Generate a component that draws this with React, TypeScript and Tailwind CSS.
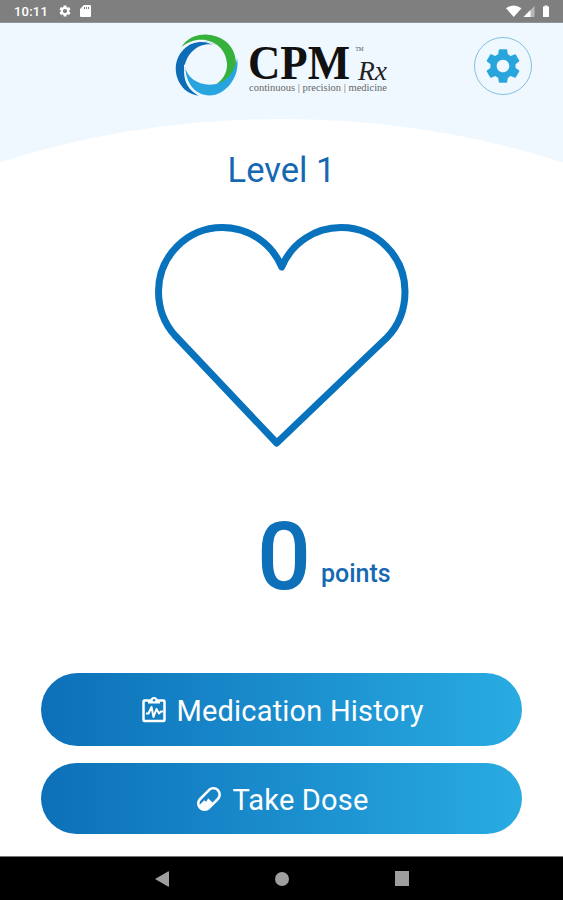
import React from "react"
import { MdSettings } from "react-icons/md"

interface ActionButtonProps {
  label: string;
  icon: React.ReactNode;
  className: string;
}

const StatusBar = () => (
  <div className="h-[23px] shrink-0 bg-[#7f7f7f] border-b border-[#949494] flex items-center justify-between pl-[14px] pr-[12px] text-white">
    <div className="flex items-center">
      <span className="w-[34px] text-[13px] leading-none font-medium tracking-[0.2px]">10:11</span>
      <MdSettings className="ml-[10px] size-[14px]" />
      <svg className="ml-[8px] w-[11px] h-[12px]" viewBox="0 0 11 12" fill="currentColor">
        <path fillRule="evenodd" d="M4 0H10Q11 0 11 1V11Q11 12 10 12H1Q0 12 0 11V4ZM4 2V4H5V2ZM6 2V4H7V2ZM8 2V4H9V2Z" />
      </svg>
    </div>
    <svg className="w-[45px] h-[13px]" viewBox="0 0 45 13" fill="currentColor">
      <path d="M0 3.3Q7.5 -2.3 15.5 3.3L7.75 12Z" />
      <path d="M28.5 1V12H17.5Z" opacity=".45" />
      <path d="M24.5 5V12H17.5Z" />
      <path d="M37 1.5H38.5V.5H41.5V1.5H43V12H37Z" />
    </svg>
  </div>
)

const Logo = () => (
  <svg className="w-[216px] h-[64px]" viewBox="175 33 216 64">
    {/* three swooshes around the ring */}
    <g transform="translate(172 30) scale(.3333)">
      <path fill="#0f6db8" d="M131 45C108 30 72 28 42 52C8 80 4 124 21 156C34 180 52 192 80 197C48 180 33 151 37 116C42 68 82 34 131 45Z" />
      <path fill="#36b23c" d="M28 52C45 24 74 12 108 14C157 17 192 53 192 100C191 136 167 160 134 161C154 149 166 126 165 101C162 64 139 38 103 31C75 26 50 34 28 52Z" />
      <path fill="#28a5df" d="M195 84C204 130 174 183 127 195C78 205 36 163 38 109C45 141 74 164 113 164C157 164 188 132 195 84Z" />
      <path fill="none" stroke="#f0f8ff" strokeWidth="4" d="M38 104C37 145 51 174 84 197M29 56C60 30 104 25 137 52" />
    </g>
    <g className="font-['Liberation_Serif',serif]">
      <text x="248" y="79" fontSize="48" fontWeight="700" fill="#111" textLength="102" lengthAdjust="spacingAndGlyphs">CPM</text>
      <text x="355.5" y="50.5" fontSize="6" fill="#444" textLength="8" lengthAdjust="spacingAndGlyphs">TM</text>
      <text x="358" y="79.5" fontSize="28" fontStyle="italic" fill="#222" textLength="29" lengthAdjust="spacingAndGlyphs">Rx</text>
      <text x="249" y="90.5" fontSize="9.5" fill="#666" textLength="138" lengthAdjust="spacingAndGlyphs">continuous | precision | medicine</text>
    </g>
  </svg>
)

const Header = () => (
  <header className="relative h-[140px] shrink-0 bg-[#f0f8ff]">
    <svg className="absolute inset-0 w-full h-full" viewBox="0 0 563 140" preserveAspectRatio="none">
      <path fill="#fff" d="M0 139.5Q135 96 281.5 96T563 139.5V140H0Z" />
    </svg>
    <div className="relative grid grid-cols-[1fr_216px_1fr] pt-[10px]">
      <span />
      <div className="relative left-[1px]">
        <Logo />
      </div>
      <button aria-label="Settings" className="mt-[4px] mr-[31px] justify-self-end size-[58px] rounded-full border border-[#85bfdf] flex items-center justify-center text-[#29a5de]">
        <MdSettings className="size-[42px]" />
      </button>
    </div>
  </header>
)

const Heart = () => (
  <svg className="w-[256px] h-[226px]" viewBox="154 223 256 226" fill="none">
    <path
      d="M281.7 267A64 64 0 0 0 222 227.5A64 64 0 0 0 158.5 291.5Q158.5 317 175 335.5L276.7 443L387 337.5Q405 319 405 291.5A64 64 0 0 0 341.5 227.5A64 64 0 0 0 281.7 267Z"
      stroke="#0872bc"
      strokeWidth="7"
      strokeLinejoin="round"
    />
  </svg>
)

const HistoryIcon = () => (
  <svg className="w-[24px] h-[27px] relative top-[-2px]" viewBox="0 0 24 27" fill="none" stroke="currentColor" strokeLinejoin="round">
    <rect x="1.5" y="4.5" width="21" height="20.5" rx="1" strokeWidth="2.5" />
    <path d="M6 7.5V4.5H8.5A3.5 3.5 0 0 1 15.5 4.5H18V7.5Z" fill="currentColor" stroke="none" />
    <circle cx="12" cy="4.2" r="1.2" fill="#1681c6" stroke="none" />
    <path d="M4 17.5H6.5L9.5 11L11.5 21L14.5 13L17 17.5L19 15.5H21" strokeWidth="2" />
  </svg>
)

const PillIcon = () => (
  <svg className="size-[30px] relative top-[-1px]" viewBox="0 0 24 24" fill="currentColor">
    <path d="M4.22 11.29L11.29 4.22C13.64 1.88 17.43 1.88 19.78 4.22C22.12 6.56 22.12 10.36 19.78 12.71L12.71 19.78C10.36 22.12 6.56 22.12 4.22 19.78C1.88 17.43 1.88 13.64 4.22 11.29M5.64 12.71C4.59 13.75 4.24 15.24 4.6 16.57L8.2 13L9.8 14.1L11.3 11.3L14.83 14.83L18.36 11.29C19.93 9.73 19.93 7.2 18.36 5.64C16.8 4.07 14.27 4.07 12.71 5.64L5.64 12.71Z" />
  </svg>
)

const ActionButton = ({ label, icon, className }: ActionButtonProps) => (
  <button className={`w-full rounded-full bg-linear-to-r from-[#0d70b8] to-[#29abe2] flex items-center justify-center text-white text-[29px] leading-none ${className}`}>
    {icon}
    <span className="whitespace-nowrap">{label}</span>
  </button>
)

const NavigationBar = () => (
  <nav className="h-[44px] shrink-0 bg-black border-t border-[#777] flex items-center justify-center gap-[106px] text-[#9e9e9e]">
    <svg className="w-[14px] h-[16px]" viewBox="0 0 14 16" fill="currentColor">
      <path d="M0 8L13 .5Q14 0 14 1V15Q14 16 13 15.5Z" />
    </svg>
    <span className="size-[14px] rounded-full bg-[#9e9e9e]" />
    <span className="w-[14px] h-[15px] bg-[#9e9e9e]" />
  </nav>
)

const App = () => {
  return (
    <div className="h-[900px] w-[563px] overflow-hidden flex flex-col bg-white font-[Roboto,sans-serif]">
      <StatusBar />
      <Header />
      <main className="flex-1 flex flex-col items-center px-[41px]">
        <h1 className="mt-[-13px] h-[41px] relative text-[34.5px] leading-[41px] text-[#1768b2]">Level 1</h1>
        <div className="mt-[32px]">
          <Heart />
        </div>
        <div className="mt-[52px] h-[112px] w-full pl-[216px] flex items-baseline text-[#0d70b8]">
          <span className="text-[95px] leading-[112px] font-medium">0</span>
          <span className="ml-[10px] text-[25px] leading-none font-medium text-[#1768b2] relative top-[-7px]">points</span>
        </div>
        <div className="mt-[60px] w-full flex flex-col gap-[17px]">
          <ActionButton label="Medication History" icon={<HistoryIcon />} className="h-[73px] gap-[10px] pt-[3px] pl-[3px] tracking-[0.2px]" />
          <ActionButton label="Take Dose" icon={<PillIcon />} className="h-[71px] gap-[8px] pt-[3px] tracking-[0.2px]" />
        </div>
      </main>
      <NavigationBar />
    </div>
  )
}

export default App
